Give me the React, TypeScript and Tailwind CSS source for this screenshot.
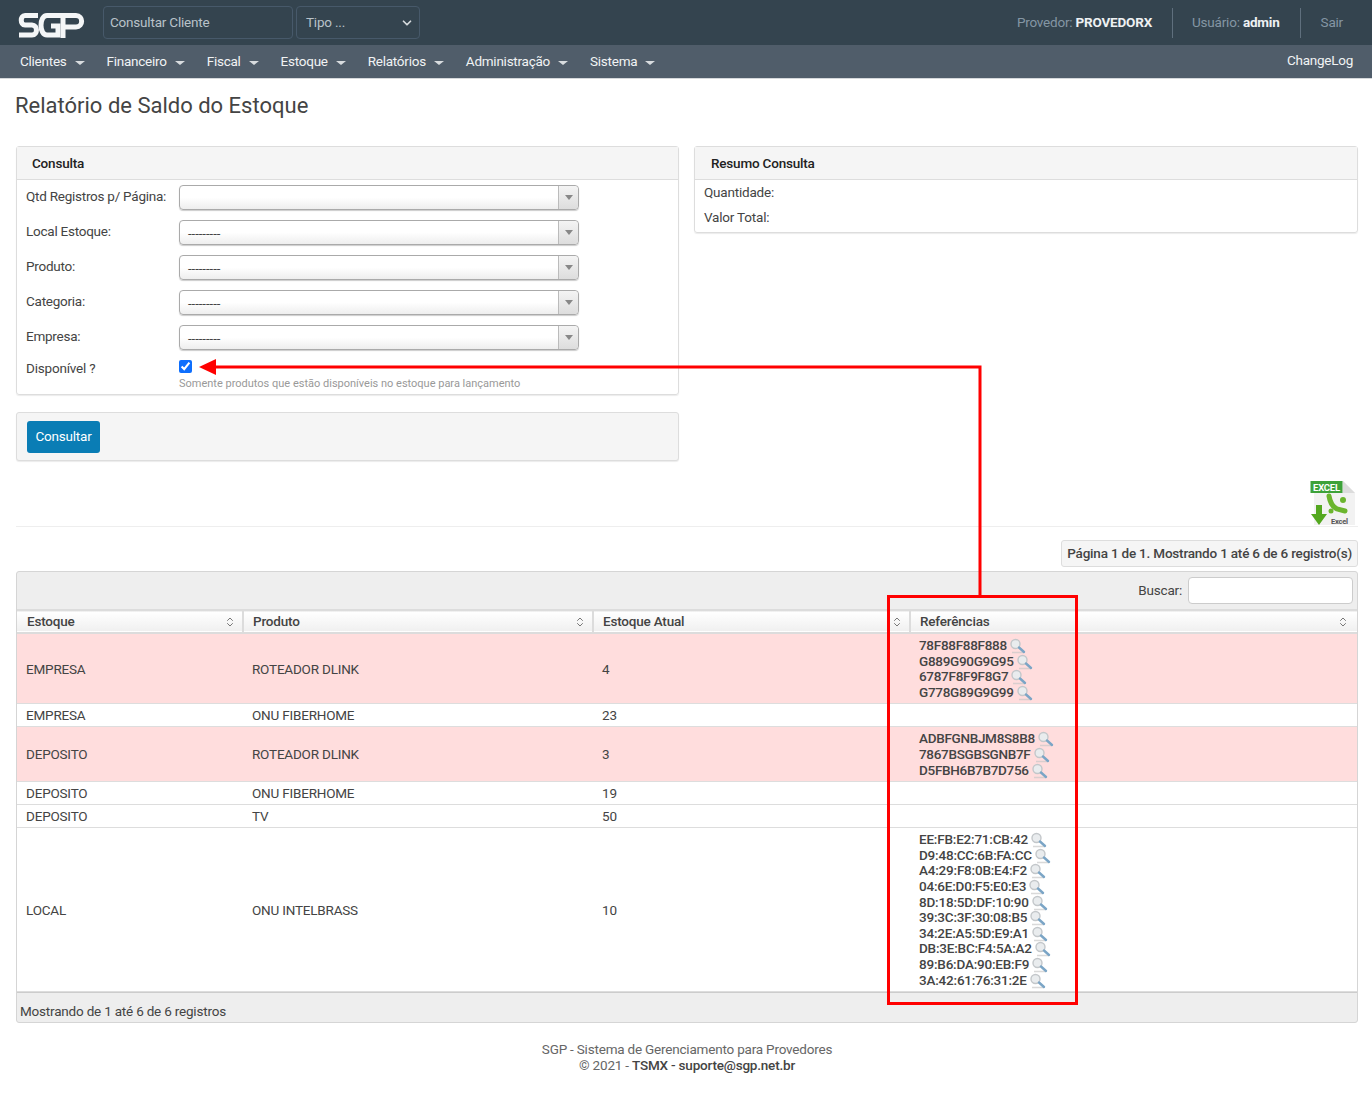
import { ChevronDown, ChevronsUpDown } from "lucide-react";

const menus = ["Clientes", "Financeiro", "Fiscal", "Estoque", "Relatórios", "Administração", "Sistema"];
const filtros = [
  { label: "Qtd Registros p/ Página:", value: "" },
  { label: "Local Estoque:", value: "---------" },
  { label: "Produto:", value: "---------" },
  { label: "Categoria:", value: "---------" },
  { label: "Empresa:", value: "---------" },
];
const linhas = [
  { estoque: "EMPRESA", produto: "ROTEADOR DLINK", atual: "4", rosa: true, refs: ["78F88F88F888", "G889G90G9G95", "6787F8F9F8G7", "G778G89G9G99"] },
  { estoque: "EMPRESA", produto: "ONU FIBERHOME", atual: "23", rosa: false, refs: [] },
  { estoque: "DEPOSITO", produto: "ROTEADOR DLINK", atual: "3", rosa: true, refs: ["ADBFGNBJM8S8B8", "7867BSGBSGNB7F", "D5FBH6B7B7D756"] },
  { estoque: "DEPOSITO", produto: "ONU FIBERHOME", atual: "19", rosa: false, refs: [] },
  { estoque: "DEPOSITO", produto: "TV", atual: "50", rosa: false, refs: [] },
  {
    estoque: "LOCAL",
    produto: "ONU INTELBRASS",
    atual: "10",
    rosa: false,
    refs: ["EE:FB:E2:71:CB:42", "D9:48:CC:6B:FA:CC", "A4:29:F8:0B:E4:F2", "04:6E:D0:F5:E0:E3", "8D:18:5D:DF:10:90", "39:3C:3F:30:08:B5", "34:2E:A5:5D:E9:A1", "DB:3E:BC:F4:5A:A2", "89:B6:DA:90:EB:F9", "3A:42:61:76:31:2E"],
  },
];

const Logo = () => (
  <svg width="68" height="30" viewBox="0 0 68 30" fill="none" stroke="#f4f6f7" strokeWidth="5">
    <path d="M20 7.5H7C2 7.5 2 17 7 17H14C20 17 20 27 14 27H1" />
    <path d="M44 7.5H29C21 7.5 21 27 29 27H40V18H33" />
    <path d="M45 30V7.5H58C65.5 7.5 65.5 19 58 19H45" />
  </svg>
);

const Lupa = () => (
  <svg width="18" height="16" viewBox="0 0 18 16" className="inline-block align-top ml-[2px]">
    <path d="M3 14.5H15" stroke="#c9c9c9" strokeWidth="1.5" opacity="0.7" />
    <circle cx="6.5" cy="6" r="4.5" fill="#e9ecee" stroke="#c3c7ca" strokeWidth="1.4" />
    <path d="M10 9.5L15 14" stroke="#7ba5c6" strokeWidth="2.4" strokeLinecap="round" />
  </svg>
);

const ExcelIcon = () => (
  <svg width="46" height="46" viewBox="0 0 46 46">
    <path d="M4 1H33L45 13V45H4Z" fill="#f2f2f2" />
    <path d="M33 1V13H45Z" fill="#dcdcdc" />
    <rect x="0.5" y="1" width="32" height="12" fill="#3da23a" />
    <text x="3" y="10.5" fontSize="9.5" fontWeight="700" fill="#fff" fontFamily="Roboto, sans-serif">EXCEL</text>
    <path d="M19 16C20 22 23 27 27 29L35 31" stroke="#6bb52e" strokeWidth="5" fill="none" strokeLinecap="round" />
    <circle cx="33" cy="20" r="3" fill="#6bb52e" />
    <circle cx="21" cy="31" r="2.5" fill="#6bb52e" />
    <path d="M6 25H12V34H17L9 45L1 34H6Z" fill="#54a81f" />
    <text x="21" y="43.5" fontSize="7.5" fontWeight="700" fill="#555" fontFamily="Roboto, sans-serif">Excel</text>
  </svg>
);

const Select2 = ({ value }: { value: string }) => (
  <div className="flex w-[400px] h-[25px] rounded-[4px] border border-[#aaa] bg-gradient-to-b from-white via-white to-[#eee] shadow-[0_1px_1px_rgba(0,0,0,0.2)]">
    <span className="flex-1 pl-[8px] text-[13px] tracking-normal leading-[25px] text-[#444]">{value}</span>
    <span className="flex w-[20px] items-center justify-center border-l border-[#bbb] bg-gradient-to-b from-[#f4f4f4] to-[#ddd] rounded-r-[4px]">
      <span className="w-0 h-0 border-x-[4px] border-x-transparent border-t-[5px] border-t-[#888]" />
    </span>
  </div>
);

const SortHead = ({ title, w }: { title: string; w?: string }) => (
  <th className={`${w ?? ""} h-[23px] border-r-2 border-[#dcdcdc] pl-[9px] pr-[6px] text-left font-medium text-[#444] first:pl-[10px] last:border-r-0 last:pr-[8px]`}>
    <div className="flex items-center justify-between">
      {title}
      <ChevronsUpDown size={12} className="text-[#777]" strokeWidth={2} />
    </div>
  </th>
);

export default function App() {
  return (
    <div className="relative min-h-[1110px] bg-white text-[13.5px] tracking-[-0.2px] text-[#444] font-['Roboto',sans-serif]">
      <header className="flex h-[45px] items-center bg-[#34444f] pl-[18px]">
        <Logo />
        <div className="ml-[17px] flex h-[33px] w-[190px] items-center rounded-[4px] border border-[#47596a] pl-[6px] text-[#b9c2c9]">Consultar Cliente</div>
        <div className="ml-[3px] flex h-[33px] w-[124px] items-center justify-between rounded-[4px] border border-[#47596a] pl-[9px] pr-[5px] text-[#b9c2c9]">
          Tipo ...
          <ChevronDown size={14} strokeWidth={3} className="text-[#d5dadd]" />
        </div>
        <div className="ml-auto flex h-full items-center">
          <span className="text-[#8496a4]">Provedor: <b className="font-bold text-[#eef1f3]">PROVEDORX</b></span>
          <span className="ml-[20px] mr-[19px] h-[30px] w-px bg-[#5f6f7d]" />
          <span className="text-[#8496a4]">Usuário: <b className="font-bold text-[#eef1f3]">admin</b></span>
          <span className="mx-[20px] h-[30px] w-px bg-[#5f6f7d]" />
          <span className="mr-[29px] text-[#8496a4]">Sair</span>
        </div>
      </header>

      <nav className="flex h-[34px] items-center border-b border-[#d5d8db] bg-[#505d6a] pl-[20px] pr-[19px] tracking-[-0.25px] text-[#f1f3f4]">
        {menus.map((m) => (
          <span key={m} className="mr-[22px] flex items-center gap-[8px]">
            {m}
            <span className="mt-[2px] h-0 w-0 border-x-[5px] border-t-[4px] border-x-transparent border-t-[#d8dcdf]" />
          </span>
        ))}
        <span className="ml-auto -mt-[2px]">ChangeLog</span>
      </nav>

      <main className="pl-[16px] pr-[14px]">
        <h1 className="-ml-px mt-[11px] h-[56px] text-[22px] tracking-normal leading-[32px] font-normal text-[#444]">Relatório de Saldo do Estoque</h1>

        <div className="grid grid-cols-[663px_664px] gap-[15px] items-start">
          <div>
            <section className="rounded-[3px] border border-[#ddd] shadow-[0_1px_1px_rgba(0,0,0,0.08)]">
              <h2 className="h-[33px] border-b border-[#ddd] bg-[#f5f5f5] pl-[15px] font-medium leading-[33px] text-[#222]">Consulta</h2>
              <div className="pl-[9px] pt-[5px]">
                {filtros.map((f) => (
                  <div key={f.label} className="mb-[10px] flex h-[25px]">
                    <label className="w-[153px] leading-[23px] tracking-[-0.25px]">{f.label}</label>
                    <Select2 value={f.value} />
                  </div>
                ))}
                <div className="flex h-[15px] items-start">
                  <label className="w-[153px] leading-[16px]">Disponível ?</label>
                  <input type="checkbox" defaultChecked className="h-[13px] w-[13px] accent-[#0d6efd]" />
                </div>
                <p className="ml-[153px] h-[19px] text-[11px] tracking-normal leading-[17px] text-[#999]">Somente produtos que estão disponíveis no estoque para lançamento</p>
              </div>
            </section>
            <section className="mt-[17px] h-[49px] rounded-[3px] border border-[#ddd] bg-[#f5f5f5] pl-[10px] pt-[8px] shadow-[0_1px_1px_rgba(0,0,0,0.08)]">
              <button className="h-[32px] w-[73px] rounded-[3px] bg-[#0a7db5] pb-[2px] text-white">Consultar</button>
            </section>
          </div>

          <section className="rounded-[3px] border border-[#ddd] shadow-[0_1px_1px_rgba(0,0,0,0.08)]">
            <h2 className="h-[33px] border-b border-[#ddd] bg-[#f5f5f5] pl-[16px] font-medium leading-[33px] text-[#222]">Resumo Consulta</h2>
            <div className="h-[52px] pl-[9px] leading-[25px]">
              <p>Quantidade:</p>
              <p>Valor Total:</p>
            </div>
          </section>
        </div>

        <div className="mt-[19px] flex h-[47px] justify-end border-b border-[#eee] pr-[2px]">
          <ExcelIcon />
        </div>

        <div className="mt-[13px] flex justify-end">
          <div className="flex h-[27px] items-center rounded-[3px] border border-[#ddd] bg-[#f5f5f5] px-[5px] font-medium">Página 1 de 1. Mostrando 1 até 6 de 6 registro(s)</div>
        </div>

        <div className="mt-[4px] rounded-[3px] border border-[#d5d5d5] bg-[#eee]">
          <div className="flex h-[37px] items-center justify-end pr-[4px]">
            <span className="mr-[6px]">Buscar:</span>
            <span className="h-[27px] w-[165px] rounded-[4px] border border-[#ccc] bg-white" />
          </div>
          <table className="w-full table-fixed border-collapse bg-white">
            <thead className="border-y-2 border-[#dcdcdc] bg-gradient-to-b from-white to-[#f0f0f0]">
              <tr>
                <SortHead title="Estoque" w="w-[226px]" />
                <SortHead title="Produto" w="w-[350px]" />
                <SortHead title="Estoque Atual" w="w-[317px]" />
                <SortHead title="Referências" />
              </tr>
            </thead>
            <tbody>
              {linhas.map((l, i) => (
                <tr key={i} className={`h-[23px] border-b border-[#ddd] ${l.rosa ? "bg-[#ffdddd]" : "bg-white"}`}>
                  <td className="pl-[9px]">{l.estoque}</td>
                  <td className="pl-[9px]">{l.produto}</td>
                  <td className="pl-[9px]">{l.atual}</td>
                  <td className={`pl-[9px] font-medium leading-[15.6px] ${l.rosa ? "tracking-[-0.3px]" : ""} ${l.refs.length ? "pt-[4px] pb-[3px]" : ""}`}>
                    {l.refs.map((r) => (
                      <div key={r} className="h-[15.6px] whitespace-nowrap">{r}<Lupa /></div>
                    ))}
                  </td>
                </tr>
              ))}
            </tbody>
          </table>
          <div className="h-[30px] border-t border-[#ccc] pl-[3px] pt-[8px] leading-[20px]">Mostrando de 1 até 6 de 6 registros</div>
        </div>

        <footer className="mt-[19px] text-center leading-[15.5px] text-[#666]">
          <p>SGP - Sistema de Gerenciamento para Provedores</p>
          <p>© 2021 - <span className="font-medium text-[#444]">TSMX - suporte@sgp.net.br</span></p>
        </footer>
      </main>

      {/* anotacao vermelha por cima da tela */}
      <div className="absolute left-[887px] top-[595px] h-[410px] w-[191px] border-[3px] border-[#f00]" />
      <svg className="absolute left-[195px] top-[355px]" width="790" height="242" viewBox="0 0 790 242" fill="none">
        <path d="M20 12H785V241" stroke="#f00" strokeWidth="3" />
        <path d="M4 12L21 4V20Z" fill="#f00" />
      </svg>
    </div>
  );
}
